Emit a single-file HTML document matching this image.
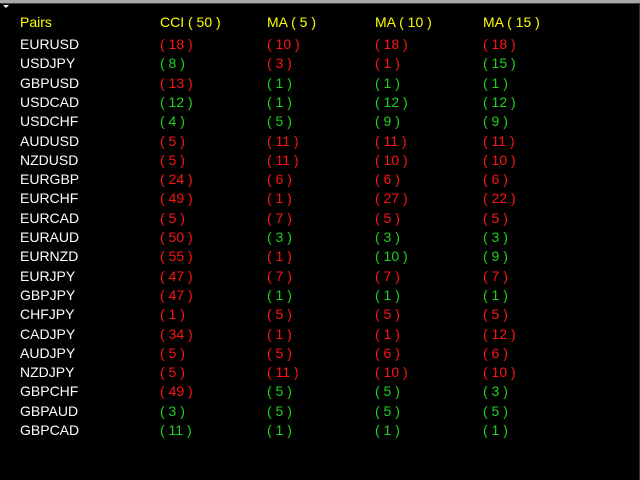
<!DOCTYPE html><html><head><style>
body{margin:0;width:640px;height:480px;background:#000;overflow:hidden;position:relative;font-family:"Liberation Sans",sans-serif;font-size:14px}
.top{position:absolute;left:0;top:0;width:640px;height:3px;background:#a8a8a8}
.top2{position:absolute;left:0;top:3px;width:640px;height:1px;background:#444}
.rt{position:absolute;right:0;top:3px;width:1px;height:477px;background:#333}
.tri{position:absolute;left:3px;top:5px;width:0;height:0;border-left:3px solid transparent;border-right:3px solid transparent;border-top:3px solid #fff}
.t{position:absolute;white-space:pre;line-height:16px}
.w{color:#fff}.y{color:#ffff00}.r{color:#ff1414}.g{color:#1ed21e}
</style></head><body>
<div class="top"></div><div class="top2"></div><div class="rt"></div><div class="tri"></div>
<div id="c"></div>
<script>
var rows=[["EURUSD","r18","r10","r18","r18"],["USDJPY","g8","r3","r1","g15"],["GBPUSD","r13","g1","g1","g1"],["USDCAD","g12","g1","g12","g12"],["USDCHF","g4","g5","g9","g9"],["AUDUSD","r5","r11","r11","r11"],["NZDUSD","r5","r11","r10","r10"],["EURGBP","r24","r6","r6","r6"],["EURCHF","r49","r1","r27","r22"],["EURCAD","r5","r7","r5","r5"],["EURAUD","r50","g3","g3","g3"],["EURNZD","r55","r1","g10","g9"],["EURJPY","r47","r7","r7","r7"],["GBPJPY","r47","g1","g1","g1"],["CHFJPY","r1","r5","r5","r5"],["CADJPY","r34","r1","r1","r12"],["AUDJPY","r5","r5","r6","r6"],["NZDJPY","r5","r11","r10","r10"],["GBPCHF","r49","g5","g5","g3"],["GBPAUD","g3","g5","g5","g5"],["GBPCAD","g11","g1","g1","g1"]];
var xs=[20,160,267,375,483],h='';
var hd=["Pairs","CCI ( 50 )","MA ( 5 )","MA ( 10 )","MA ( 15 )"];
for(var i=0;i<5;i++)h+='<div class="t y" style="left:'+xs[i]+'px;top:14px">'+hd[i]+'</div>';
rows.forEach(function(r,j){var y=36+j*19.3;
h+='<div class="t w" style="left:20px;top:'+y+'px">'+r[0]+'</div>';
for(var i=1;i<5;i++)h+='<div class="t '+r[i][0]+'" style="left:'+xs[i]+'px;top:'+y+'px">( '+r[i].slice(1)+' )</div>';});
document.getElementById('c').innerHTML=h;
</script></body></html>
